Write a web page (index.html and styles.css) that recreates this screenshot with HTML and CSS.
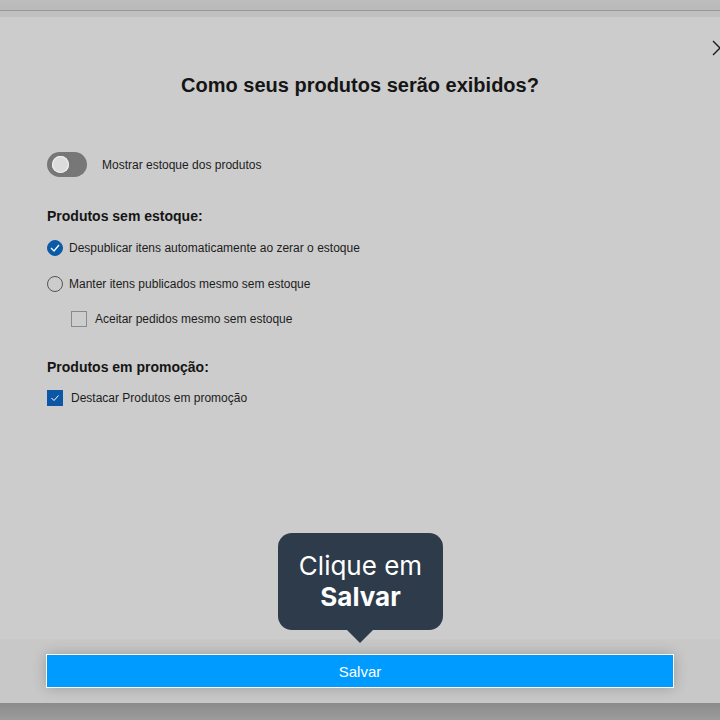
FILE: index.html
```html
<!DOCTYPE html>
<html lang="pt-BR">
<head>
    <meta charset="UTF-8">
    <meta name="viewport" content="width=device-width, initial-scale=1.0">
    <title>Exibição de produtos</title>
    <link rel="stylesheet" href="styles.css">
</head>
<body>
    <div class="topbar"></div>
    <div class="topgap"></div>

    <div class="modal">
        <button class="close" aria-label="Fechar">
            <svg width="16" height="16" viewBox="0 0 16 16">
                <path d="M1 1 L15 15 M15 1 L1 15" stroke="#1a1a1a" stroke-width="1.4" fill="none"/>
            </svg>
        </button>

        <h1 class="title">Como seus produtos serão exibidos?</h1>

        <div class="options">
            <label class="toggle-row">
                <span class="toggle"><span class="knob"></span></span>
                <span class="text">Mostrar estoque dos produtos</span>
            </label>

            <h2 class="section">Produtos sem estoque:</h2>

            <label class="row">
                <span class="radio checked">
                    <svg width="10" height="8" viewBox="0 0 10 8"><path d="M1 4 L4 7 L9 1" stroke="#fff" stroke-width="1.3" fill="none"/></svg>
                </span>
                <span class="text">Despublicar itens automaticamente ao zerar o estoque</span>
            </label>
            <label class="row row-gap">
                <span class="radio"></span>
                <span class="text">Manter itens publicados mesmo sem estoque</span>
            </label>
            <label class="row row-sub">
                <span class="check"></span>
                <span class="text">Aceitar pedidos mesmo sem estoque</span>
            </label>

            <h2 class="section section-promo">Produtos em promoção:</h2>

            <label class="row">
                <span class="check checked">
                    <svg width="10" height="8" viewBox="0 0 10 8"><path d="M1.5 4 L4 6.5 L8.5 1.5" stroke="#fff" stroke-width="1" fill="none"/></svg>
                </span>
                <span class="text text-promo">Destacar Produtos em promoção</span>
            </label>
        </div>

        <div class="tip">
            Clique em<br><b>Salvar</b>
            <span class="tip-arrow"></span>
        </div>
    </div>

    <div class="footer">
        <button class="save">Salvar</button>
    </div>
    <div class="bottom"></div>
</body>
</html>
```

FILE: styles.css
```css
html, body{
    margin: 0;
    height: 720px;
    overflow: hidden;
}
body{
    display: flex;
    flex-direction: column;
    background-color: #cccccc;
    font-family: "Liberation Sans", Arial, sans-serif;
    color: #1c1c1c;
}
.topbar{
    height: 10px;
    background: linear-gradient(#bdbdbd, #b9b9b9);
    border-bottom: 1px solid #979797;
}
.topgap{
    height: 6px;
    background-color: #c0c0c0;
}
.modal{
    flex: 1;
    display: flex;
    flex-direction: column;
    position: relative;
    background-color: #cccccc;
}
.close{
    position: absolute;
    top: 23px;
    left: 712px;
    padding: 0;
    border: none;
    background: none;
    line-height: 0;
}
.title{
    margin: 56px 0 0;
    text-align: center;
    font-size: 20px;
    line-height: 24px;
    font-weight: 700;
    color: #151515;
}
.options{
    padding-left: 47px;
    margin-top: 55px;
    font-size: 12px;
}
.toggle-row, .row{
    display: flex;
    align-items: center;
}
.toggle{
    width: 40px;
    height: 25px;
    border-radius: 13px;
    background-color: #777777;
    display: flex;
    align-items: center;
    padding-left: 5px;
    box-sizing: border-box;
}
.knob{
    width: 17px;
    height: 17px;
    border-radius: 50%;
    background-color: #dcdcdc;
    box-shadow: 0 0 0 1px #f2f2f2 inset;
}
.toggle-row .text{
    margin-left: 15px;
}
.section{
    margin: 30px 0 15px;
    font-size: 14px;
    line-height: 18px;
    font-weight: 700;
    color: #151515;
}
.section-promo{
    margin: 31px 0 14px;
}
.radio{
    width: 14px;
    height: 14px;
    border: 1px solid #555;
    border-radius: 50%;
    display: flex;
    align-items: center;
    justify-content: center;
}
.radio.checked{
    background-color: #0b5aa8;
    border-color: #0b5aa8;
}
.check{
    width: 14px;
    height: 14px;
    border: 1px solid #8a8a8a;
    background-color: #cdcdcd;
    display: flex;
    align-items: center;
    justify-content: center;
}
.check.checked{
    background-color: #0c56a6;
    border-color: #0c56a6;
}
.row .text{
    margin-left: 6px;
    line-height: 16px;
}
.row-gap{
    margin-top: 20px;
}
.row-sub{
    margin: 19px 0 0 24px;
}
.row-sub .text{
    margin-left: 8px;
}
.row .text-promo{
    margin-left: 8px;
}
.tip{
    position: relative;
    align-self: center;
    margin: auto 0 9px 1px;
    width: 165px;
    height: 97px;
    box-sizing: border-box;
    padding-top: 17px;
    background-color: #2d3b4b;
    border-radius: 14px;
    color: #ffffff;
    font-family: Inter, "Noto Sans", sans-serif;
    font-size: 26px;
    line-height: 31px;
    text-align: center;
}
.tip b{
    font-weight: 700;
}
.tip-arrow{
    position: absolute;
    left: 69px;
    bottom: -13px;
    border-left: 13px solid transparent;
    border-right: 13px solid transparent;
    border-top: 13px solid #2d3b4b;
}
.footer{
    height: 64px;
    background-color: #c8c8c8;
    display: flex;
    align-items: center;
    justify-content: center;
}
.save{
    width: 628px;
    height: 34px;
    background-color: #009bff;
    border: 1px solid #ffffff;
    color: #ffffff;
    font-family: "Liberation Sans", Arial, sans-serif;
    font-size: 15px;
    box-shadow: 0 0 14px rgba(0, 0, 0, 0.22);
}
.bottom{
    height: 17px;
    background: linear-gradient(#8b8b8b, #9c9c9c);
}
```
